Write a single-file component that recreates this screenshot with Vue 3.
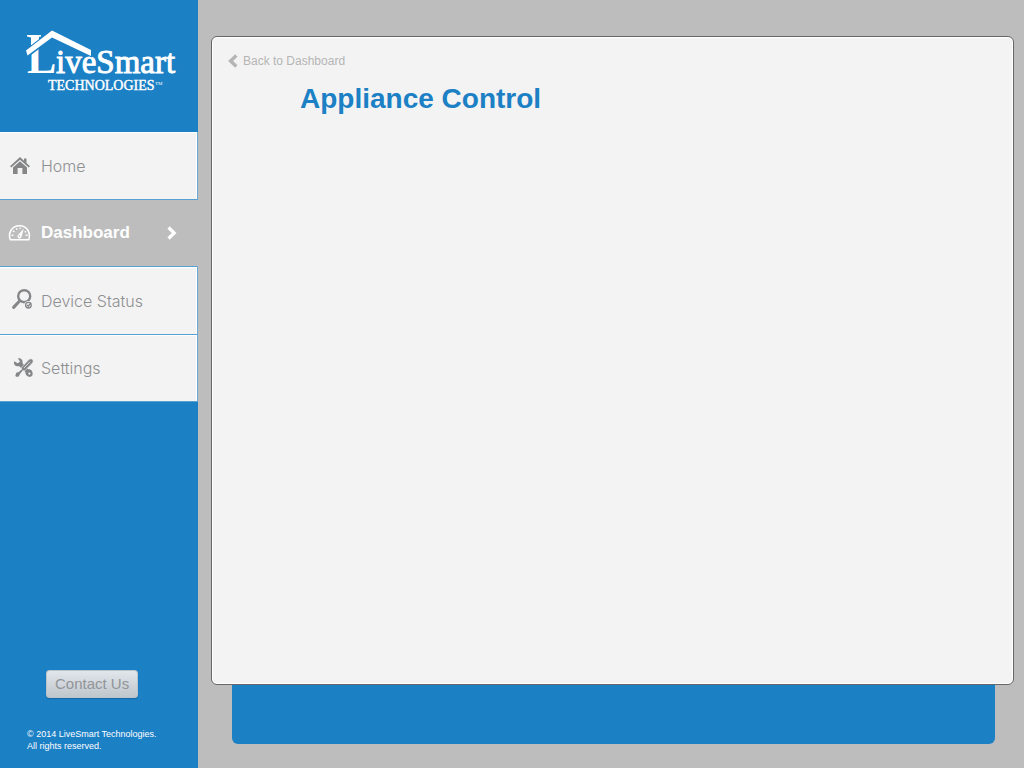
<script setup>
const items = [
  { id: 'home', label: 'Home' },
  { id: 'dashboard', label: 'Dashboard' },
  { id: 'status', label: 'Device Status' },
  { id: 'settings', label: 'Settings' }
]
const active = 'dashboard'
</script>

<template>
  <div class="app">
    <aside class="sidebar">
      <a class="brand" href="#" aria-label="LiveSmart Technologies">
        <svg width="160" height="70" viewBox="0 0 160 70">
          <g fill="#fff" stroke="#fff" font-family="'Liberation Serif', serif">
            <text x="2" y="45" font-size="44" font-weight="bold" stroke="none">L</text>
            <text x="31" y="45" font-size="33" stroke-width="0.9">iveSmart</text>
            <text x="23" y="62" font-size="14" stroke-width="0.4">TECHNOLOGIES</text>
            <text x="130" y="57" font-size="5" stroke="none">TM</text>
          </g>
          <path d="M1 12H18V18L2 30H0Z" fill="#1c80c5" />
          <path d="M2 7H16V8.5L14 9V12L6 18V9.5L2 8.5Z" fill="#fff" />
          <path d="M1 22.5 27 2.5 66 22V28L27 9.5 2.5 27.5Z" fill="#fff" stroke="#1c80c5" stroke-width="2" paint-order="stroke" />
        </svg>
      </a>

      <nav class="menu">
        <a v-for="item in items" :key="item.id" href="#" class="item" :class="{ active: item.id === active }">
          <svg class="icon" width="26" height="24" viewBox="0 0 26 24">
            <g v-if="item.id === 'home'" transform="translate(2 3)" fill="#858688">
              <path d="M10 0 14 3.7V1.5H16.5V6L20 9.2 18.7 10.6 10 2.7 1.3 10.6 0 9.2Z" />
              <path d="M10 4.3 17 10.6V17H12.4V11H7.6V17H3V10.6Z" />
            </g>
            <g v-else-if="item.id === 'dashboard'" transform="translate(0 3)" fill="none" stroke="#fff">
              <path d="M2.3 15.8C-.2 9 3.7 1.8 11.5 1.8S23 9 20.7 15.8Z" stroke-width="1.5" stroke-linejoin="round" />
              <path d="M3.6 11.2H5.4M5 6.9 6.4 7.8M8.3 4.2 9 5.6M12.1 3.7V5.1M17.7 11.2H19.5M16.7 8.1 18 7.4" stroke-width="1.4" />
              <path d="M15.8 4.5 13.5 13A2 2 0 0 1 9.6 11.6Z" fill="#fff" stroke="none" />
              <circle cx="11.5" cy="12.1" r=".8" fill="#bdbdbd" stroke="none" />
            </g>
            <g v-else-if="item.id === 'status'" transform="translate(3 0)" fill="none" stroke="#858688">
              <circle cx="13.2" cy="7.2" r="6" stroke-width="2.4" />
              <path d="M8.6 12 2.6 18.4" stroke-width="3" stroke-linecap="round" />
              <circle cx="17.4" cy="16.2" r="4.2" fill="#f3f3f3" stroke="none" />
              <circle cx="17.4" cy="16.2" r="2.8" stroke-width="1.3" />
              <path d="m16 16 1.2 1.2 2.8-3.2" stroke-width="1.4" />
            </g>
            <g v-else transform="translate(5.5 2)">
              <path d="M.6 3.2 4.3 5.2 6.6 3.6 4.4.4C7-.1 9.8 2 9 5.2L14.8 11.2C17.5 10.7 20 13.5 18.9 17.4L16.8 18.9C13.5 18.7 11.5 16.4 11.9 14L5.8 8.2C3 9-.4 7 .6 3.2Z" fill="#858688" />
              <circle cx="15.9" cy="15.6" r="1.1" fill="#f3f3f3" />
              <path d="m1.8 18 .9-3.2 2.7-.9 3.4-3.2 1.2 1.2-3.3 3.5-1.3 2.8-1.9.9Z" fill="#858688" />
              <path d="M8.2 9.2 15.4 1.5C18-.5 21 2.5 19 5L11.4 12.7 9.4 12.8 8 11.4Z" fill="#858688" stroke="#f3f3f3" stroke-width=".6" />
              <path d="m10.4 10 6.3-6.3" stroke="#f3f3f3" stroke-width=".8" />
            </g>
          </svg>
          <span class="label">{{ item.label }}</span>
          <svg v-if="item.id === active" class="arrow" width="10" height="14" viewBox="0 0 10 14" fill="none" stroke="#fff" stroke-width="3.2">
            <path d="M1.5 1.5 7.2 7 1.5 12.5" />
          </svg>
        </a>
      </nav>

      <div class="bottom">
        <button class="contact" type="button">Contact Us</button>
        <p class="legal">© 2014 LiveSmart Technologies.<br />All rights reserved.</p>
      </div>
    </aside>

    <main class="main">
      <section class="panel">
        <a class="back" href="#">
          <svg width="10" height="14" viewBox="0 0 10 14" fill="none" stroke="#b5b5b5" stroke-width="3.4">
            <path d="M8.3 1.5 2.6 7 8.3 12.5" />
          </svg>
          Back to Dashboard
        </a>
        <h1 class="title">Appliance Control</h1>
      </section>
      <div class="tray"></div>
    </main>
  </div>
</template>

<style>
body {
  background: #bdbdbd;
}
</style>

<style scoped>
.app {
  display: flex;
  min-height: 100vh;
  background: #bdbdbd;
  font-family: "Liberation Sans", Arial, sans-serif;
}
a {
  text-decoration: none;
}
.sidebar {
  display: flex;
  flex-direction: column;
  flex: 0 0 198px;
  box-sizing: border-box;
  background: #1c80c5;
}
.brand {
  display: block;
  box-sizing: border-box;
  height: 132px;
  padding: 28px 0 0 25px;
}
.brand svg,
.icon {
  display: block;
}
.item {
  display: flex;
  align-items: center;
  box-sizing: border-box;
  height: 68px;
  padding: 0 20px 0 8px;
  background: #f3f3f3;
  border-right: 1px solid #69a9d6;
  border-bottom: 1px solid #57a0d2;
  box-shadow: inset -1px 1px #fff;
  color: #8f9092;
  font-family: Inter, "Liberation Sans", sans-serif;
  font-size: 16px;
  font-weight: 300;
}
.item:nth-child(even) {
  height: 67px;
}
.item.active {
  background: #bdbdbd;
  border-right-color: #bdbdbd;
  box-shadow: none;
  color: #fff;
  font-family: "Liberation Sans", Arial, sans-serif;
  font-size: 17px;
  font-weight: bold;
}
.icon {
  margin-right: 7px;
}
.arrow {
  margin-left: auto;
}
.bottom {
  display: flex;
  flex-direction: column;
  align-items: flex-start;
  margin-top: auto;
  padding: 0 20px 16px 27px;
}
.contact {
  height: 28px;
  margin: 0 0 30px 19px;
  padding: 0 8px 2px;
  border: 1px solid #b9c4cd;
  border-radius: 3px;
  background: linear-gradient(#e1e6eb, #bfc6cc);
  box-shadow: 0 1px 1px #1768a1;
  color: #929497;
  font: 15px "Liberation Sans", Arial, sans-serif;
}
.legal {
  margin: 0;
  color: #fff;
  font-size: 9px;
  line-height: 12px;
  white-space: nowrap;
}
.main {
  display: flex;
  flex: 1;
  flex-direction: column;
  padding: 36px 10px 24px 13px;
}
.panel {
  flex: 1;
  box-sizing: border-box;
  padding: 16px;
  border: 1px solid #666;
  border-radius: 6px;
  background: #f3f3f3;
  box-shadow: inset 0 0 0 1px #fff;
}
.back {
  display: flex;
  align-items: center;
  gap: 5px;
  width: fit-content;
  color: #b5b5b5;
  font-size: 12px;
  line-height: 16px;
}
.title {
  margin: 13px 0 0 72px;
  color: #1c80c5;
  font-size: 28px;
  line-height: 34px;
}
.tray {
  height: 59px;
  margin: 0 19px 0 21px;
  border-radius: 0 0 6px 6px;
  background: #1c80c5;
}
</style>
